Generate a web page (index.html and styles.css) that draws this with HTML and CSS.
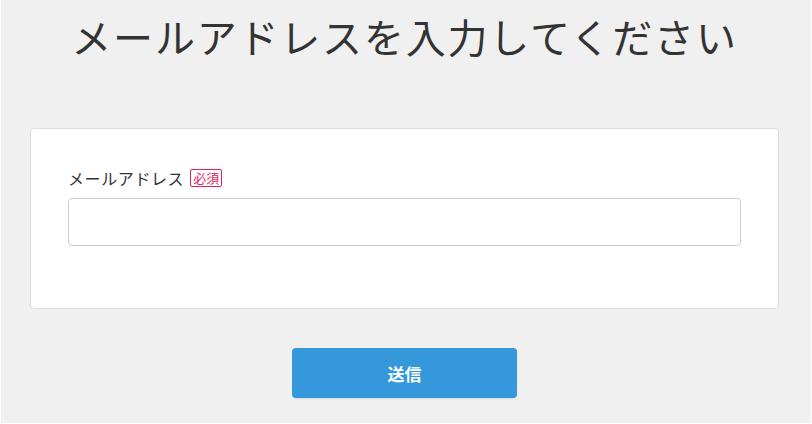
FILE: index.html
```html
<!DOCTYPE html>
<html lang="ja">
<head>
<meta charset="utf-8">
<title>メールアドレスを入力してください</title>
<link rel="stylesheet" href="styles.css">
</head>
<body>
<div class="page">
  <main class="container">
    <h1 class="title">メールアドレスを入力してください</h1>
    <form class="card">
      <label class="label" for="email">メールアドレス<span class="badge">必須</span></label>
      <input class="input" id="email" type="email">
    </form>
    <div class="actions">
      <button class="button" type="button">送信</button>
    </div>
  </main>
</div>
</body>
</html>
```

FILE: styles.css
```css
html, body {
  margin: 0;
  padding: 0;
}
body {
  background: #ffffff;
  font-family: "Noto Sans CJK JP", "Noto Sans", sans-serif;
  color: #333333;
}
.page {
  background: #f0f0f0;
  width: 810px;
  height: 423px;
  margin-left: 1px;
  overflow: hidden;
}
.container {
  width: 749px;
  margin-left: 29px;
  display: flex;
  flex-direction: column;
}
.title {
  margin: 10px 0 0 0;
  font-size: 40px;
  font-weight: 400;
  letter-spacing: 1.8px;
  line-height: 52px;
  text-align: center;
  color: #333333;
}
.card {
  margin-top: 66px;
  background: #ffffff;
  border: 1px solid #dddddd;
  border-radius: 4px;
  padding: 38px 37px 0 37px;
  display: flex;
  flex-direction: column;
  height: 181px;
  box-sizing: border-box;
}
.label {
  font-size: 16px;
  line-height: 22px;
  letter-spacing: 0.6px;
  color: #333333;
  display: flex;
  align-items: center;
}
.badge {
  margin-left: 6px;
  font-size: 13px;
  line-height: 16px;
  color: #e0245e;
  border: 1px solid #e0245e;
  border-radius: 2px;
  padding: 0 2px;
  letter-spacing: 0;
}
.input {
  margin-top: 9px;
  height: 48px;
  box-sizing: border-box;
  border: 1px solid #cccccc;
  border-radius: 4px;
  background: #ffffff;
  font-size: 16px;
  padding: 0 12px;
}
.actions {
  margin-top: 39px;
  display: flex;
  justify-content: center;
}
.button {
  width: 225px;
  height: 50px;
  background: #3498db;
  border: none;
  border-radius: 4px;
  color: #ffffff;
  font-family: "Noto Sans CJK JP", "Noto Sans", sans-serif;
  font-size: 17px;
  font-weight: 700;
  box-shadow: 0 1px 1px rgba(0,0,0,0.08);
}
```
